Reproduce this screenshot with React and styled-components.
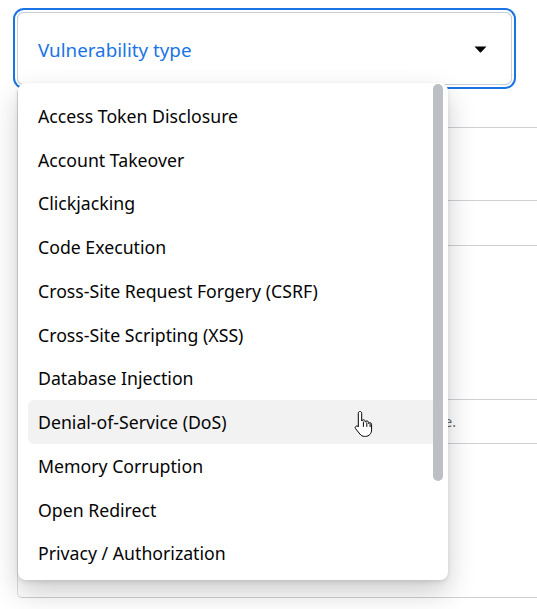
import React from "react";
import styled, { createGlobalStyle } from "styled-components";

const Global = createGlobalStyle`
  html, body { margin: 0; padding: 0; background: #fff; }
  body { font-family: "Noto Sans", "Open Sans", sans-serif; color: #050505; }
`;

const Page = styled.div`
  position: relative;
  width: 537px;
  height: 609px;
  overflow: hidden;
  padding-top: 12px;
  box-sizing: border-box;
`;

const Select = styled.div`
  margin-left: 17px;
  width: 495px;
  height: 73px;
  box-sizing: border-box;
  border: 1px solid #ccd0d5;
  border-radius: 7px;
  box-shadow: 0 0 0 2px #fff, 0 0 0 4px #1b74e4;
  display: flex;
  align-items: center;
  justify-content: space-between;
  padding: 2px 24px 0 20px;
`;

const Placeholder = styled.span`
  font-size: 18.8px;
  color: #1b74e4;
`;

const Caret = styled.svg`
  width: 13px;
  height: 7px;
`;

const Card = styled.div`
  margin: 6px 0 0 17px;
  width: 560px;
  border-left: 1px solid #dadde1;
  border-bottom: 1px solid #ced0d4;
  border-bottom-left-radius: 5px;
`;

const Row = styled.div`
  height: ${(p) => p.$h}px;
  border-bottom: ${(p) => (p.$last ? "none" : "1px solid #ced0d4")};
  display: flex;
  align-items: center;
`;

const HintClip = styled.div`
  margin-left: 429px;
  width: 9px;
  overflow: hidden;
  display: flex;
  justify-content: flex-end;
`;

const Hint = styled.span`
  flex: none;
  white-space: nowrap;
  font-size: 14px;
  color: #65676b;
`;

const Menu = styled.div`
  position: absolute;
  left: 18px;
  top: 83px;
  width: 430px;
  height: 497px;
  box-sizing: border-box;
  padding-top: 11px;
  background: #fff;
  border-radius: 8px;
  box-shadow: 0 12px 28px 0 rgba(0, 0, 0, 0.2), 0 2px 4px 0 rgba(0, 0, 0, 0.1);
  overflow: hidden;
`;

const Item = styled.div`
  height: 43.75px;
  margin: 0 10px;
  padding-left: 10px;
  display: flex;
  align-items: center;
  font-size: 17.7px;
  color: #050505;
  border-radius: 6px;
  background: ${(p) => (p.$hover ? "#f2f2f2" : "transparent")};
`;

const Scrollbar = styled.div`
  position: absolute;
  right: 5px;
  top: 1px;
  width: 10px;
  height: 397px;
  border-radius: 5px;
  background: #bcc0c4;
`;

const Cursor = styled.svg`
  position: absolute;
  left: 354px;
  top: 410px;
  width: 20px;
  height: 28px;
`;

const items = [
  "Access Token Disclosure",
  "Account Takeover",
  "Clickjacking",
  "Code Execution",
  "Cross-Site Request Forgery (CSRF)",
  "Cross-Site Scripting (XSS)",
  "Database Injection",
  "Denial-of-Service (DoS)",
  "Memory Corruption",
  "Open Redirect",
  "Privacy / Authorization",
];

export default function App() {
  return (
    <>
      <Global />
      <Page>
        <Select>
          <Placeholder>Vulnerability type</Placeholder>
          <Caret viewBox="0 0 13 7">
            <path d="M0.5 0.5h12L7.1 6.2a0.8 0.8 0 0 1-1.2 0z" fill="#050505" />
          </Caret>
        </Select>
        <Card>
          <Row $h={36} />
          <Row $h={72} />
          <Row $h={44} />
          <Row $h={153} />
          <Row $h={43}>
            <HintClip>
              <Hint>Select the type that best describes the issue.</Hint>
            </HintClip>
          </Row>
          <Row $h={153} $last />
        </Card>
        <Menu>
          {items.map((t) => (
            <Item key={t} $hover={t === "Denial-of-Service (DoS)"}>
              {t}
            </Item>
          ))}
          <Scrollbar />
        </Menu>
        <Cursor viewBox="0 0 20 28">
          <path
            d="M6 1.5c1 0 1.7.8 1.7 1.7v7.8c.3-.8 1-1.2 1.8-1.2 1 0 1.7.8 1.7 1.7v.6c.3-.7 1-1.1 1.7-1.1 1 0 1.7.8 1.7 1.7v.8c.3-.5.8-.8 1.4-.8 1 0 1.6.8 1.6 1.7v5.4c0 3.6-2.6 6.6-6 6.6H10.5c-2 0-3.5-.9-4.6-2.4L1.5 18.6c-.5-.7-.4-1.7.3-2.2.7-.6 1.7-.5 2.3.2l.2.3V3.2C4.3 2.3 5 1.5 6 1.5z"
            fill="#fff"
            stroke="#000"
            strokeWidth="1"
            strokeLinejoin="round"
          />
          <path d="M9.4 12v4.5M12.8 12.8v3.7M16.1 13.8v2.8" stroke="#000" strokeWidth="1" strokeLinecap="round" />
        </Cursor>
      </Page>
    </>
  );
}
